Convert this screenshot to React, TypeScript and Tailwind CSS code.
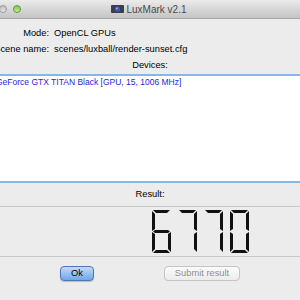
import React from "react";

type Seg = "a" | "b" | "c" | "d" | "e" | "f" | "g";

// seven-segment pieces of the LCD widget, 19x43 each digit
const segClass: Record<Seg, string> = {
  a: "left-[1px] top-0 h-[3px] w-[17px] [clip-path:polygon(0_0,100%_0,calc(100%_-_3px)_100%,3px_100%)]",
  d: "left-[1px] top-[40px] h-[3px] w-[17px] [clip-path:polygon(3px_0,calc(100%_-_3px)_0,100%_100%,0_100%)]",
  g: "left-[1px] top-[20px] h-[3px] w-[17px] [clip-path:polygon(0_50%,2px_0,calc(100%_-_2px)_0,100%_50%,calc(100%_-_2px)_100%,2px_100%)]",
  f: "left-0 top-[1px] h-[20px] w-[3px] [clip-path:polygon(0_0,100%_3px,100%_calc(100%_-_2px),0_100%)]",
  e: "left-0 top-[22px] h-[20px] w-[3px] [clip-path:polygon(0_0,100%_2px,100%_calc(100%_-_3px),0_100%)]",
  b: "left-[16px] top-[1px] h-[20px] w-[3px] [clip-path:polygon(0_3px,100%_0,100%_100%,0_calc(100%_-_2px))]",
  c: "left-[16px] top-[22px] h-[20px] w-[3px] [clip-path:polygon(0_2px,100%_0,100%_100%,0_calc(100%_-_3px))]",
};

const digitSegs: Record<string, Seg[]> = {
  "0": ["a", "b", "c", "d", "e", "f"],
  "6": ["a", "f", "g", "e", "d", "c"],
  "7": ["a", "b", "c"],
};

function LcdDigit({ d }: { d: string }) {
  return (
    <div className="relative h-[43px] w-[19px]" aria-hidden>
      {digitSegs[d].map((s) => (
        <div key={s} className={`absolute bg-[#111] ${segClass[s]}`} />
      ))}
    </div>
  );
}

function LcdNumber({ value }: { value: string }) {
  return (
    <div className="flex gap-[7px]">
      <span className="sr-only">{value}</span>
      {value.split("").map((d, i) => (
        <LcdDigit key={i} d={d} />
      ))}
    </div>
  );
}

function AppIcon() {
  return (
    <svg width="13" height="8" viewBox="0 0 13 8" className="mr-[2px]">
      <rect x="0" y="0" width="13" height="8" rx="1" fill="#3a3f4a" />
      <circle cx="6.5" cy="4" r="2.6" fill="#3b5bd8" />
      <circle cx="5.8" cy="3.3" r="0.9" fill="#9fb4ff" />
    </svg>
  );
}

export default function App() {
  return (
    <div className="flex h-[300px] w-[300px] flex-col overflow-hidden bg-[#ececec] font-['Liberation_Sans',Arial,sans-serif] text-[9.3px] text-black">
      <div className="grid h-[19px] grid-cols-[1fr_auto_1fr] items-center border-b border-[#a9a9a9] bg-gradient-to-b from-[#ebebeb] to-[#c4c4c4]">
        <div className="flex items-center gap-[6px] pl-[-1px]">
          <span className="-ml-[1px] h-[8px] w-[8px] rounded-full border border-[#9a9a9a] bg-gradient-to-b from-[#bdbdbd] to-[#e6e6e6]" />
          <span className="h-[8px] w-[8px] rounded-full border border-[#5f9a3a] bg-gradient-to-b from-[#7fc657] to-[#c4ec98]" />
        </div>
        <div className="flex items-center pr-[2px] text-[10px] text-[#4a4a4a]">
          <AppIcon />
          <span>LuxMark v2.1</span>
        </div>
        <div />
      </div>

      <div className="grid grid-cols-[49px_1fr] gap-x-[5px] pt-[7px]">
        <div className="flex h-[16px] items-center justify-end whitespace-nowrap">Mode:</div>
        <div className="flex h-[16px] items-center">OpenCL GPUs</div>
        <div className="flex h-[16px] items-center justify-end whitespace-nowrap">Scene name:</div>
        <div className="flex h-[16px] items-center">scenes/luxball/render-sunset.cfg</div>
      </div>
      <div className="flex h-[15px] items-center justify-center">Devices:</div>

      <div className="mt-[1px] h-[109px] border-y-2 border-[#8bb5e3] bg-white">
        <div className="-ml-[4px] flex h-[12px] items-center whitespace-nowrap text-[8.5px] text-[#1f1fe6]">
          GeForce GTX TITAN Black [GPU, 15, 1006 MHz]
        </div>
      </div>

      <div className="flex h-[23px] items-center justify-center">Result:</div>
      <div className="flex h-[51px] items-start justify-end border-y border-[#c8c8c8] pr-[51px] pt-[3px]">
        <LcdNumber value="6770" />
      </div>

      <div className="flex gap-[70px] pl-[60px] pt-[9px]">
        <button
          type="button"
          className="h-[15px] w-[34px] rounded-[4px] border border-[#4f77b5] bg-gradient-to-b from-[#c2dbf7] to-[#6fa6ea] text-[9.3px] leading-none text-black shadow-[0_1px_1px_rgba(0,0,0,0.2)]"
        >
          Ok
        </button>
        <button
          type="button"
          disabled
          className="h-[15px] w-[76px] rounded-[4px] border border-[#c4c4c4] bg-gradient-to-b from-[#fbfbfb] to-[#ececec] text-[9.3px] leading-none text-[#8e8e8e]"
        >
          Submit result
        </button>
      </div>
    </div>
  );
}
